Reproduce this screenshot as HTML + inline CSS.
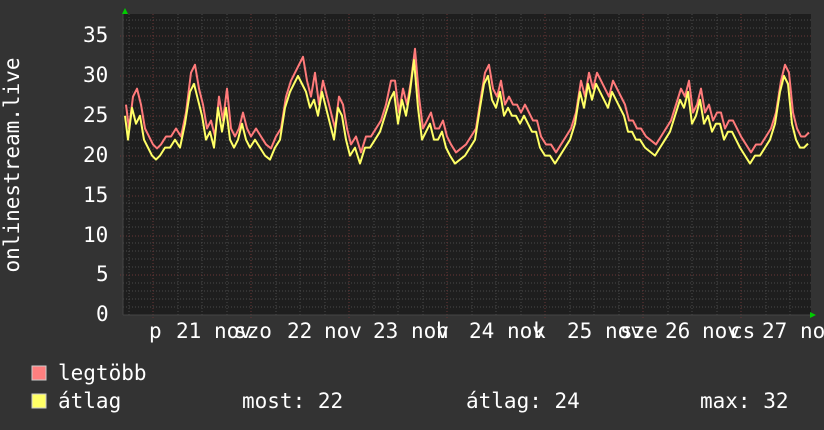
<!DOCTYPE html>
<html><head><meta charset="utf-8"><style>
body{margin:0;background:#333;width:824px;height:430px;overflow:hidden;font-family:"DejaVu Sans Mono","Liberation Mono",monospace;color:#fff}
.t{position:absolute;font-size:21px;white-space:pre;line-height:1}
</style></head><body>
<svg width="824" height="430" style="position:absolute;left:0;top:0">
<rect x="123" y="14" width="688" height="301" fill="#1e1e1e"/>
<g stroke="#4a4a4a" stroke-dasharray="1,2">
<line x1="123" y1="307" x2="811" y2="307"/><line x1="123" y1="299" x2="811" y2="299"/><line x1="123" y1="291" x2="811" y2="291"/><line x1="123" y1="283" x2="811" y2="283"/>
<line x1="123" y1="267" x2="811" y2="267"/><line x1="123" y1="259" x2="811" y2="259"/><line x1="123" y1="251" x2="811" y2="251"/><line x1="123" y1="243" x2="811" y2="243"/>
<line x1="123" y1="227" x2="811" y2="227"/><line x1="123" y1="219" x2="811" y2="219"/><line x1="123" y1="211" x2="811" y2="211"/><line x1="123" y1="203" x2="811" y2="203"/>
<line x1="123" y1="188" x2="811" y2="188"/><line x1="123" y1="180" x2="811" y2="180"/><line x1="123" y1="172" x2="811" y2="172"/><line x1="123" y1="164" x2="811" y2="164"/>
<line x1="123" y1="148" x2="811" y2="148"/><line x1="123" y1="140" x2="811" y2="140"/><line x1="123" y1="132" x2="811" y2="132"/><line x1="123" y1="124" x2="811" y2="124"/>
<line x1="123" y1="108" x2="811" y2="108"/><line x1="123" y1="100" x2="811" y2="100"/><line x1="123" y1="92" x2="811" y2="92"/><line x1="123" y1="84" x2="811" y2="84"/>
<line x1="123" y1="68" x2="811" y2="68"/><line x1="123" y1="60" x2="811" y2="60"/><line x1="123" y1="52" x2="811" y2="52"/><line x1="123" y1="44" x2="811" y2="44"/>
<line x1="123" y1="28" x2="811" y2="28"/><line x1="123" y1="20" x2="811" y2="20"/>
<line x1="129" y1="14" x2="129" y2="315"/><line x1="178" y1="14" x2="178" y2="315"/><line x1="202" y1="14" x2="202" y2="315"/><line x1="227" y1="14" x2="227" y2="315"/>
<line x1="276" y1="14" x2="276" y2="315"/><line x1="300" y1="14" x2="300" y2="315"/><line x1="325" y1="14" x2="325" y2="315"/>
<line x1="374" y1="14" x2="374" y2="315"/><line x1="398" y1="14" x2="398" y2="315"/><line x1="423" y1="14" x2="423" y2="315"/>
<line x1="472" y1="14" x2="472" y2="315"/><line x1="496" y1="14" x2="496" y2="315"/><line x1="521" y1="14" x2="521" y2="315"/>
<line x1="570" y1="14" x2="570" y2="315"/><line x1="594" y1="14" x2="594" y2="315"/><line x1="619" y1="14" x2="619" y2="315"/>
<line x1="668" y1="14" x2="668" y2="315"/><line x1="692" y1="14" x2="692" y2="315"/><line x1="717" y1="14" x2="717" y2="315"/>
<line x1="766" y1="14" x2="766" y2="315"/><line x1="790" y1="14" x2="790" y2="315"/>
</g>
<g stroke="#6a3535" stroke-dasharray="1,2">
<line x1="120" y1="36" x2="811" y2="36"/><line x1="120" y1="76" x2="811" y2="76"/><line x1="120" y1="116" x2="811" y2="116"/><line x1="120" y1="156" x2="811" y2="156"/><line x1="120" y1="196" x2="811" y2="196"/><line x1="120" y1="236" x2="811" y2="236"/><line x1="120" y1="275" x2="811" y2="275"/>
<line x1="153" y1="14" x2="153" y2="318"/><line x1="251" y1="14" x2="251" y2="318"/><line x1="349" y1="14" x2="349" y2="318"/><line x1="447" y1="14" x2="447" y2="318"/><line x1="545" y1="14" x2="545" y2="318"/><line x1="643" y1="14" x2="643" y2="318"/><line x1="741" y1="14" x2="741" y2="318"/>
</g>
<line x1="123" y1="315" x2="811" y2="315" stroke="#444"/>
<line x1="123" y1="14" x2="123" y2="315" stroke="#444"/>
<polygon points="122,14 128,14 125,8" fill="#0c0"/>
<polygon points="810,312 810,318 816,315" fill="#0c0"/>
<g transform="translate(0,315) scale(1,-7.97)" fill="none" stroke-width="2" stroke-linejoin="round">
<polyline transform="translate(1,1.4)" vector-effect="non-scaling-stroke" stroke="#ff7a7a" points="125,25 128,22 132,26 136,27 140,25 144,22 148,21 152,20 156,19.5 160,20 165,21 170,21 175,22 180,21 185,24 190,29 194,30 198,27 202,25 206,22 210,23 214,21 218,26 222,23 226,27 230,22 234,21 238,22 242,24 246,22 250,21 255,22 260,21 265,20 270,19.5 275,21 280,22 285,26 290,28 294,29 298,30 302,31 306,28 310,26 314,29 318,25 322,28 326,26 330,24 334,22 338,26 342,25 346,22 350,20 355,21 360,19 365,21 370,21 375,22 380,23 385,25 390,28 394,28 398,24 402,27 406,25 410,28 414,32 418,26 422,22 426,23 430,24 434,22 438,22 442,23 446,21 450,20 455,19 460,19.5 465,20 470,21 475,22 480,26 484,29 488,30 492,27 496,26 500,28 504,25 508,26 512,25 516,25 520,24 524,25 528,24 532,23 536,23 540,21 545,20 550,20 555,19 560,20 565,21 570,22 575,24 580,28 584,26 588,29 592,27 596,29 600,28 604,27 608,26 612,28 616,27 620,26 624,25 628,23 632,23 636,22 640,22 645,21 650,20.5 655,20 660,21 665,22 670,23 675,25 680,27 684,26 688,28 692,24 696,25 700,27 704,24 708,25 712,23 716,24 720,24 724,22 728,23 732,23 736,22 740,21 745,20 750,19 755,20 760,20 765,21 770,22 775,24 780,28 784,30 788,29 792,24 796,22 800,21 804,21 808,21.5"/>
<polyline vector-effect="non-scaling-stroke" stroke="#ffff66" points="125,25 128,22 132,26 136,24 140,25 144,22 148,21 152,20 156,19.5 160,20 165,21 170,21 175,22 180,21 185,24 190,28 194,29 198,27 202,25 206,22 210,23 214,21 218,26 222,23 226,26 230,22 234,21 238,22 242,24 246,22 250,21 255,22 260,21 265,20 270,19.5 275,21 280,22 285,26 290,28 294,29 298,30 302,29 306,28 310,26 314,27 318,25 322,28 326,26 330,24 334,22 338,26 342,25 346,22 350,20 355,21 360,19 365,21 370,21 375,22 380,23 385,25 390,27 394,28 398,24 402,27 406,25 410,28 414,32 418,26 422,22 426,23 430,24 434,22 438,22 442,23 446,21 450,20 455,19 460,19.5 465,20 470,21 475,22 480,26 484,29 488,30 492,27 496,26 500,28 504,25 508,26 512,25 516,25 520,24 524,25 528,24 532,23 536,23 540,21 545,20 550,20 555,19 560,20 565,21 570,22 575,24 580,28 584,26 588,29 592,27 596,29 600,28 604,27 608,26 612,28 616,27 620,26 624,25 628,23 632,23 636,22 640,22 645,21 650,20.5 655,20 660,21 665,22 670,23 675,25 680,27 684,26 688,28 692,24 696,25 700,27 704,24 708,25 712,23 716,24 720,24 724,22 728,23 732,23 736,22 740,21 745,20 750,19 755,20 760,20 765,21 770,22 775,24 780,28 784,30 788,29 792,24 796,22 800,21 804,21 808,21.5"/>
</g>
<rect x="32" y="366" width="14" height="14" fill="#ff7f7f" stroke="#ccc" stroke-width="1"/>
<rect x="32" y="394" width="14" height="14" fill="#ffff66" stroke="#ccc" stroke-width="1"/>
<text x="19" y="165" transform="rotate(-90 19 165)" text-anchor="middle" fill="#fff" font-size="21" font-family="DejaVu Sans Mono,monospace">onlinestream.live</text>
</svg>
<div class="t" style="left:83px;top:25px">35</div>
<div class="t" style="left:83px;top:65px">30</div>
<div class="t" style="left:83px;top:105px">25</div>
<div class="t" style="left:83px;top:145px">20</div>
<div class="t" style="left:83px;top:185px">15</div>
<div class="t" style="left:83px;top:225px">10</div>
<div class="t" style="left:96px;top:264px">5</div>
<div class="t" style="left:96px;top:304px">0</div>
<div class="t" style="left:149px;top:321px">p</div>
<div class="t" style="left:176px;top:321px">21</div>
<div class="t" style="left:214px;top:321px">nov</div>
<div class="t" style="left:234px;top:321px">szo</div>
<div class="t" style="left:287px;top:321px">22</div>
<div class="t" style="left:324px;top:321px">nov</div>
<div class="t" style="left:373px;top:321px">23</div>
<div class="t" style="left:411px;top:321px">nov</div>
<div class="t" style="left:436px;top:321px">h</div>
<div class="t" style="left:469px;top:321px">24</div>
<div class="t" style="left:507px;top:321px">nov</div>
<div class="t" style="left:533px;top:321px">k</div>
<div class="t" style="left:567px;top:321px">25</div>
<div class="t" style="left:605px;top:321px">nov</div>
<div class="t" style="left:620px;top:321px">sze</div>
<div class="t" style="left:665px;top:321px">26</div>
<div class="t" style="left:702px;top:321px">nov</div>
<div class="t" style="left:730px;top:321px">cs</div>
<div class="t" style="left:762px;top:321px">27</div>
<div class="t" style="left:800px;top:321px">nov</div>
<div class="t" style="left:58px;top:363px">legtöbb</div>
<div class="t" style="left:58px;top:391px">átlag</div>
<div class="t" style="left:242px;top:391px">most: 22</div>
<div class="t" style="left:466px;top:391px">átlag: 24</div>
<div class="t" style="left:700px;top:391px">max: 32</div>
</body></html>
